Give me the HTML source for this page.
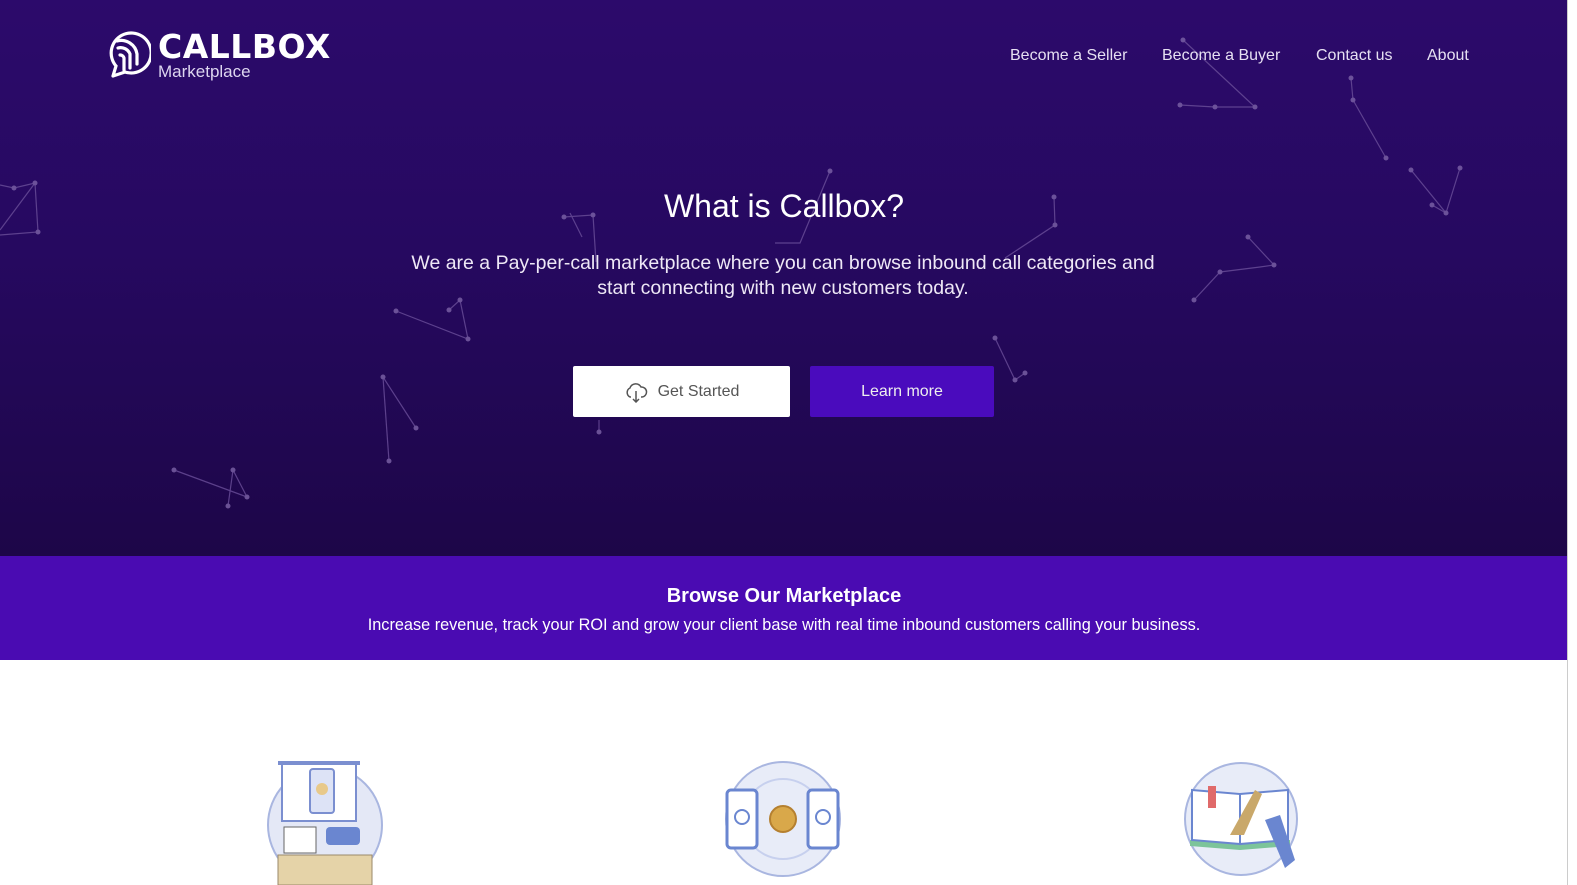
<!DOCTYPE html>
<html><head><meta charset="utf-8"><style>
*{margin:0;padding:0;box-sizing:border-box}
body{width:1577px;height:885px;overflow:hidden;background:#fff;font-family:"Liberation Sans",Arial,sans-serif;position:relative}
.hero{position:absolute;left:0;top:0;width:1568px;height:556px;background:linear-gradient(180deg,#2c0a6b 0%,#260960 45%,#1d0648 100%)}
.band{position:absolute;left:0;top:556px;width:1568px;height:104px;background:#4a0bb2;color:#fff;text-align:center}
.band h2{font-size:20px;font-weight:bold;margin-top:29px}
.band p{font-size:16.3px;margin-top:8px}
.nav a{position:absolute;top:47px;color:#e6e0f2;font-size:16px;text-decoration:none}
h1{position:absolute;left:0;width:1568px;top:188px;text-align:center;color:#fff;font-weight:normal;font-size:32px}
.sub{position:absolute;left:388px;width:790px;top:251px;text-align:center;color:#eee8f6;font-size:19.5px;line-height:25px}
.btn1{position:absolute;left:573px;top:366px;width:217px;height:51px;background:#fff;border-radius:2px;color:#555;font-size:16px;display:flex;align-items:center;justify-content:center;gap:10px}
.btn2{position:absolute;left:810px;top:366px;width:184px;height:51px;background:#4a0bbd;border-radius:2px;color:#eee;font-size:16px;display:flex;align-items:center;justify-content:center}
.logo{position:absolute;left:105px;top:30px;color:#fff}
.logo .t{position:absolute;left:53px;top:0;font-size:33px;font-weight:900;letter-spacing:0.5px;font-family:"DejaVu Sans","Liberation Sans",sans-serif;line-height:34px}
.logo .m{position:absolute;left:53px;top:32px;font-size:17px;color:#ddd6f0;white-space:nowrap}
.sb{position:absolute;left:1567px;top:0;width:10px;height:885px;background:#fff;border-left:1px solid #ccc}
</style></head><body>
<div class="hero">
<svg width="1568" height="556" style="position:absolute;left:0;top:0" stroke="#6b4f9a" stroke-width="1.2" fill="#7d64a8" opacity="0.8">
<g fill="none"><polyline points="0,185 14,188 35,183 38,232 0,235"/><polyline points="0,230 35,183"/>
<polyline points="1183,40 1255,107 1215,107 1180,105"/><polyline points="1351,78 1353,100 1386,158"/>
<polyline points="1411,170 1446,213 1460,168"/><polyline points="1432,205 1446,213"/>
<polyline points="1054,197 1055,225 1005,258"/><polyline points="1248,237 1274,265 1260,267 1220,272 1194,300"/>
<polyline points="564,217 593,215 596,262"/><polyline points="570,213 582,237"/>
<polyline points="396,311 468,339 460,300 449,310"/><polyline points="383,377 389,461"/><polyline points="383,377 416,428"/>
<polyline points="174,470 247,497 233,470 228,506"/><polyline points="995,338 1015,380 1025,373"/>
<polyline points="830,171 800,243 775,243"/><polyline points="599,420 599,432"/></g>
<g stroke="none"><circle cx="14" cy="188" r="2.5"/><circle cx="35" cy="183" r="2.5"/><circle cx="38" cy="232" r="2.5"/>
<circle cx="1255" cy="107" r="2.5"/><circle cx="1215" cy="107" r="2.5"/><circle cx="1180" cy="105" r="2.5"/><circle cx="1183" cy="40" r="2.5"/>
<circle cx="1351" cy="78" r="2.5"/><circle cx="1353" cy="100" r="2.5"/><circle cx="1386" cy="158" r="2.5"/>
<circle cx="1411" cy="170" r="2.5"/><circle cx="1446" cy="213" r="2.5"/><circle cx="1460" cy="168" r="2.5"/><circle cx="1432" cy="205" r="2.5"/>
<circle cx="1054" cy="197" r="2.5"/><circle cx="1055" cy="225" r="2.5"/><circle cx="1248" cy="237" r="2.5"/><circle cx="1274" cy="265" r="2.5"/><circle cx="1220" cy="272" r="2.5"/><circle cx="1194" cy="300" r="2.5"/>
<circle cx="564" cy="217" r="2.5"/><circle cx="593" cy="215" r="2.5"/><circle cx="396" cy="311" r="2.5"/><circle cx="468" cy="339" r="2.5"/><circle cx="460" cy="300" r="2.5"/><circle cx="449" cy="310" r="2.5"/>
<circle cx="383" cy="377" r="2.5"/><circle cx="389" cy="461" r="2.5"/><circle cx="416" cy="428" r="2.5"/>
<circle cx="174" cy="470" r="2.5"/><circle cx="247" cy="497" r="2.5"/><circle cx="233" cy="470" r="2.5"/><circle cx="228" cy="506" r="2.5"/>
<circle cx="995" cy="338" r="2.5"/><circle cx="1015" cy="380" r="2.5"/><circle cx="1025" cy="373" r="2.5"/><circle cx="830" cy="171" r="2.5"/><circle cx="599" cy="432" r="2.5"/></g>
</svg>
<div class="logo">
<svg width="46" height="48" viewBox="0 0 46 48" fill="none" stroke="#fff" stroke-width="3.2" stroke-linecap="round">
<path d="M8 46 L11 36 A20 20 0 1 1 20 42 L8 46"/>
<path d="M13 18 A10 10 0 0 1 25 24 L25 38"/><path d="M12 11 A16 16 0 0 1 32 24 L32 34"/><path d="M15 25 A4 4 0 0 1 19 28 L19 40"/>
</svg>
<div class="t">CALLBOX</div><div class="m">Marketplace</div>
</div>
<div class="nav"><a style="left:1010px">Become a Seller</a><a style="left:1162px">Become a Buyer</a><a style="left:1316px">Contact us</a><a style="left:1427px">About</a></div>
<h1>What is Callbox?</h1>
<div class="sub">We are a Pay-per-call marketplace where you can browse inbound call categories and<br>start connecting with new customers today.</div>
<div class="btn1"><svg width="24" height="22" viewBox="0 0 24 22" fill="none" stroke="#555" stroke-width="1.5"><path d="M7 16 H6 A5 5 0 0 1 6 7 A6 6 0 0 1 17 6 A5 5 0 0 1 18 16 H17"/><path d="M12 10 V21 M9 18 L12 21 L15 18"/></svg>Get Started</div>
<div class="btn2">Learn more</div>
</div>
<div class="band"><h2>Browse Our Marketplace</h2><p>Increase revenue, track your ROI and grow your client base with real time inbound customers calling your business.</p></div>
<svg style="position:absolute;left:260px;top:755px" width="130" height="130" viewBox="0 0 130 130">
<ellipse cx="65" cy="70" rx="57" ry="58" fill="#e4e8f6" stroke="#a9b6e0" stroke-width="2"/>
<rect x="22" y="8" width="74" height="58" fill="#fff" stroke="#7b8fd0" stroke-width="2"/><rect x="18" y="6" width="82" height="4" fill="#7b8fd0"/>
<rect x="50" y="14" width="24" height="44" rx="3" fill="#dde3f6" stroke="#7b8fd0" stroke-width="2"/><circle cx="62" cy="34" r="6" fill="#e8c98a"/>
<rect x="18" y="100" width="94" height="30" fill="#e5d3a8" stroke="#9a8a6a"/><rect x="24" y="72" width="32" height="26" fill="#fff" stroke="#666"/>
<rect x="66" y="72" width="34" height="18" rx="4" fill="#6a86d0"/></svg>
<svg style="position:absolute;left:720px;top:760px" width="125" height="120" viewBox="0 0 125 120">
<ellipse cx="63" cy="59" rx="57" ry="57" fill="#e8ecf8" stroke="#a9b6e0" stroke-width="2"/><ellipse cx="63" cy="59" rx="40" ry="40" fill="none" stroke="#c7d0ee" stroke-width="2"/>
<rect x="7" y="30" width="30" height="58" rx="4" fill="#fff" stroke="#6a86d0" stroke-width="3"/><rect x="88" y="30" width="30" height="58" rx="4" fill="#fff" stroke="#6a86d0" stroke-width="3"/>
<circle cx="63" cy="59" r="13" fill="#d9a84a" stroke="#b58030" stroke-width="2"/><circle cx="22" cy="57" r="7" fill="none" stroke="#6a86d0" stroke-width="2"/><circle cx="103" cy="57" r="7" fill="none" stroke="#6a86d0" stroke-width="2"/></svg>
<svg style="position:absolute;left:1180px;top:760px" width="125" height="120" viewBox="0 0 125 120">
<ellipse cx="61" cy="59" rx="56" ry="56" fill="#e8ecf8" stroke="#a9b6e0" stroke-width="2"/>
<path d="M10 80 L60 84 L110 80 L110 86 L60 90 L10 86Z" fill="#7cc49a"/>
<path d="M12 30 L60 34 L60 84 L12 80Z" fill="#fff" stroke="#6a86d0" stroke-width="2"/><path d="M60 34 L108 30 L108 80 L60 84Z" fill="#fff" stroke="#6a86d0" stroke-width="2"/>
<rect x="28" y="26" width="8" height="22" fill="#e06a6a"/><path d="M50 75 L75 30 L82 34 L64 75Z" fill="#c9a86a"/><path d="M85 60 L100 55 L115 100 L105 108Z" fill="#6a86d0"/></svg>
<div class="sb"></div>
</body></html>
